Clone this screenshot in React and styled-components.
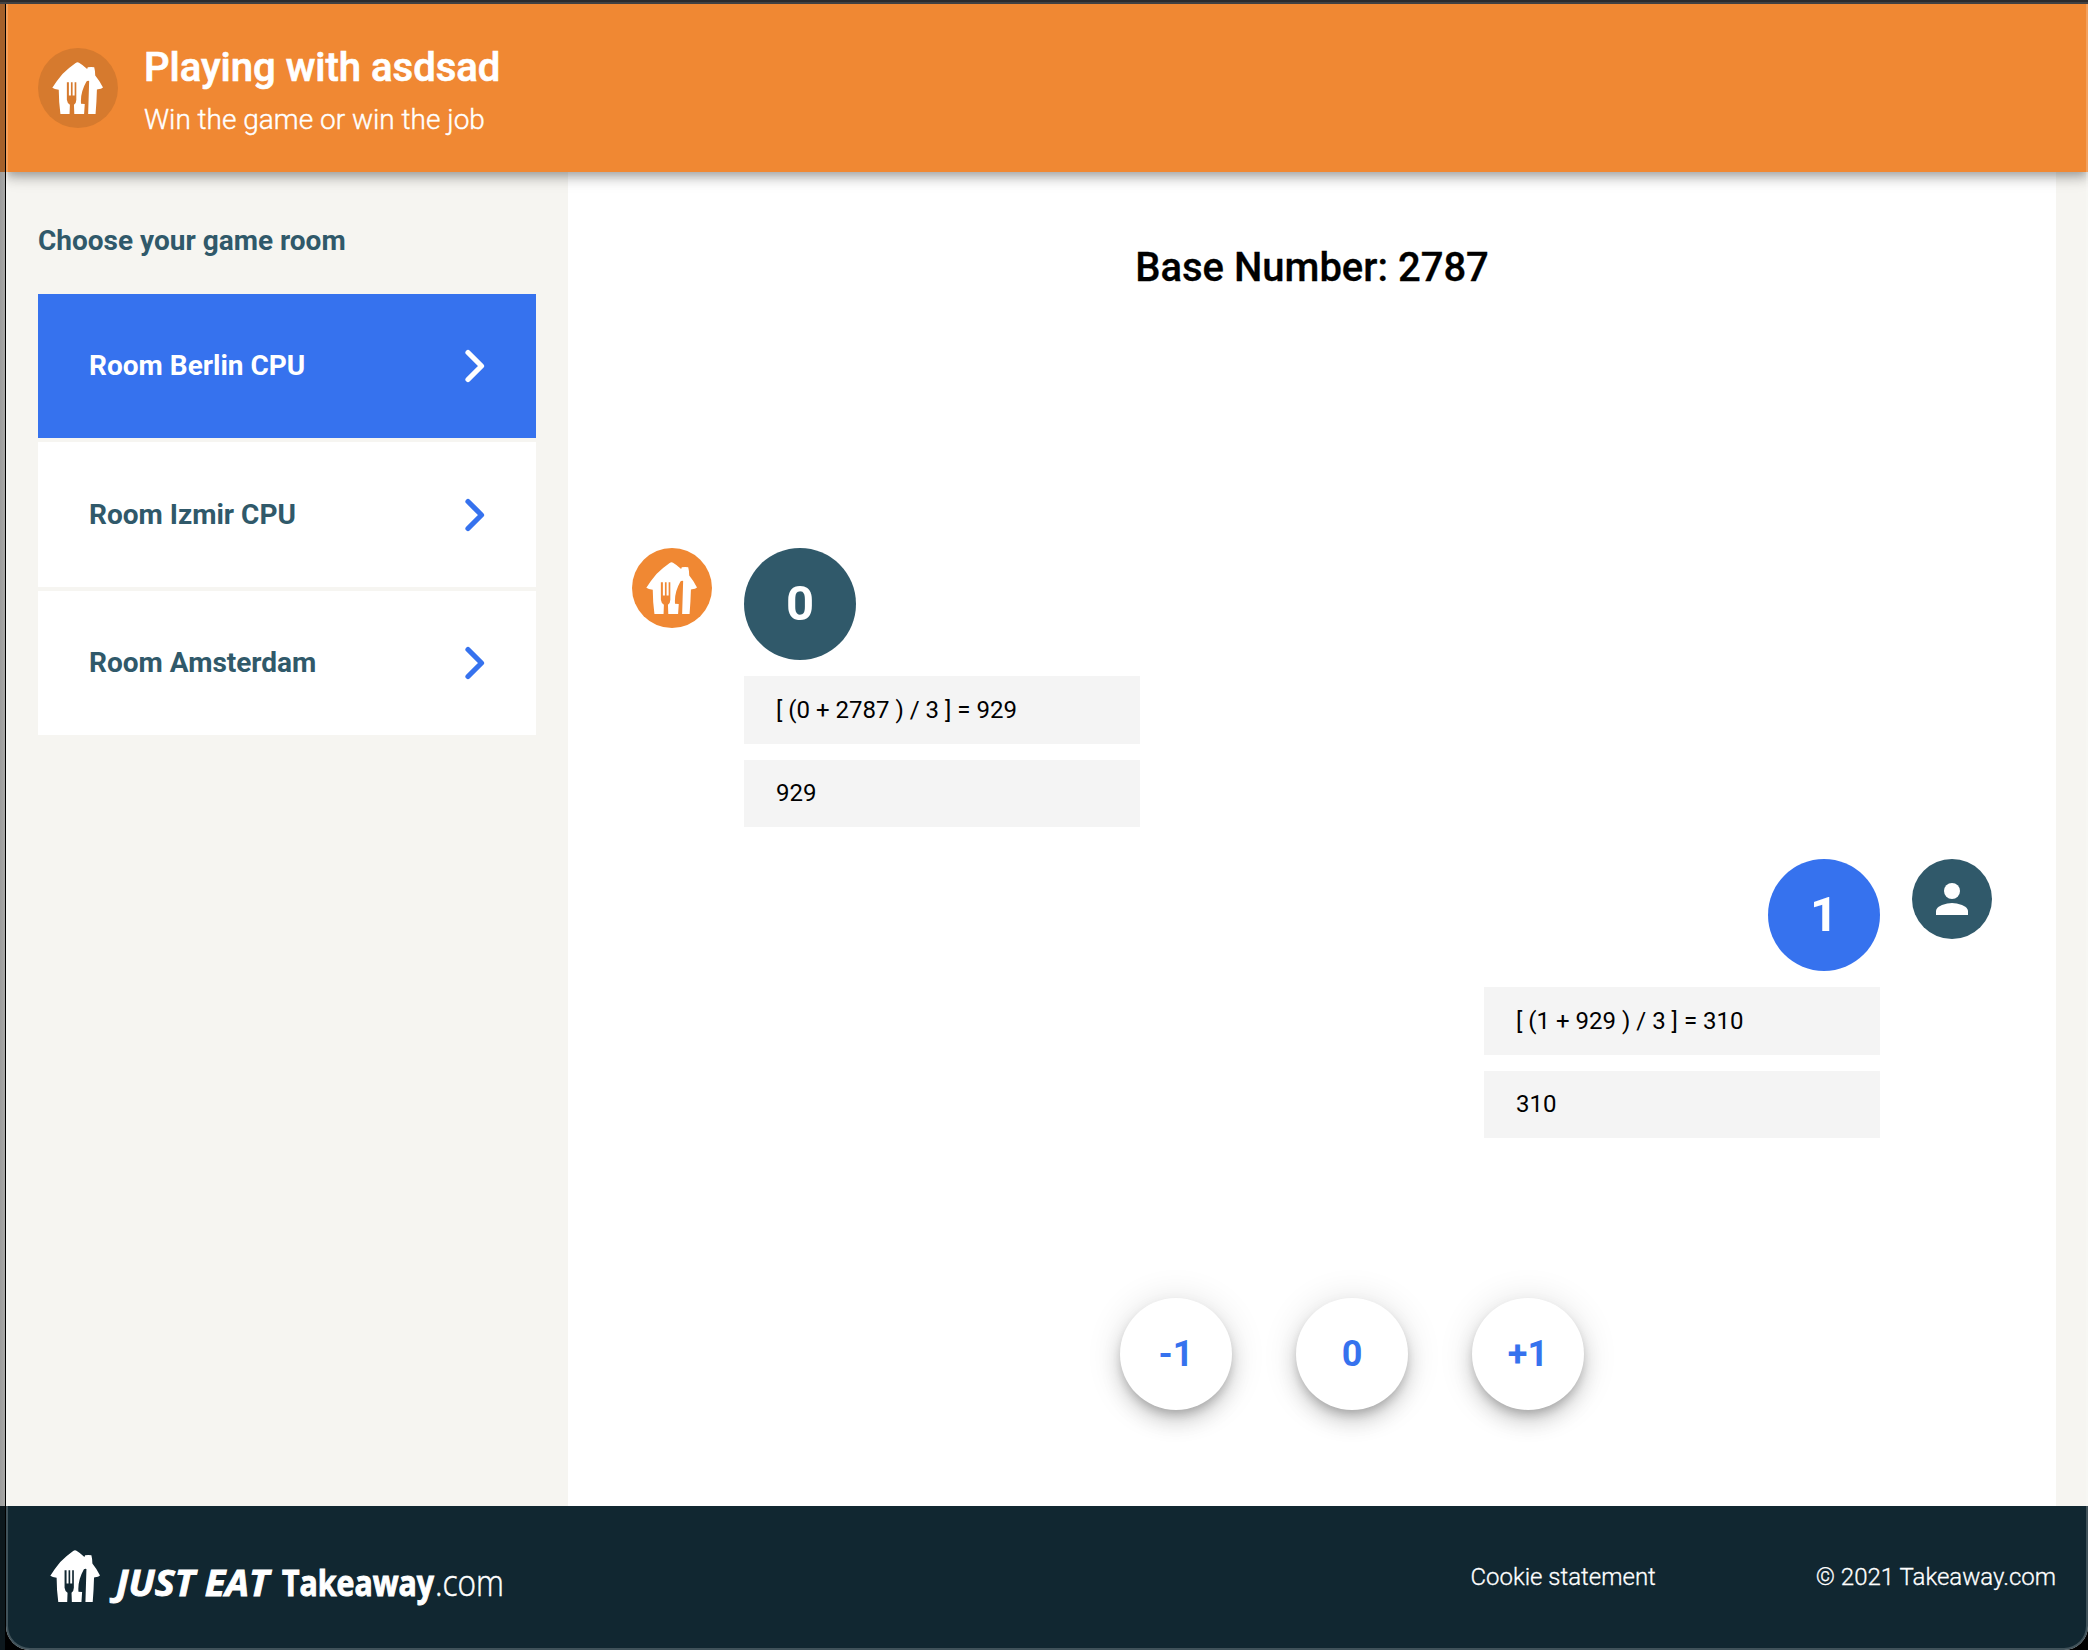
import React from "react";
import styled, { createGlobalStyle } from "styled-components";

const GlobalStyle = createGlobalStyle`
  * { box-sizing: border-box; }
  body { margin: 0; background: #000; font-family: Roboto, "Liberation Sans", sans-serif; }
  h1, h2, p { margin: 0; }
  button { font-family: inherit; border: 0; margin: 0; }
`;

const Desktop = styled.div`
  position: relative;
  height: 1650px;
  padding-left: 6px;
  overflow: hidden;
  background: linear-gradient(90deg, #a3602a 0 5px, #000 5px 6px, transparent 6px) 0 4px / 100% 168px no-repeat,
    linear-gradient(90deg, #0d181d 0 5px, #000 5px 6px, transparent 6px) 0 1506px / 100% 144px no-repeat,
    linear-gradient(90deg, #9d9d9d, #a8a8a6 5px, #000 5px 6px, #000 6px);
`;

const Window = styled.div`
  height: 1650px;
  display: flex;
  flex-direction: column;
  border-radius: 0 0 24px 24px;
  overflow: hidden;
  background: #f6f5f1;
`;

const TopEdge = styled.div`
  position: absolute;
  inset: 0 0 auto 0;
  height: 4px;
  background: linear-gradient(#2b2b2d 0 2px, #414143 2px 4px);
  z-index: 3;
`;

const WindowEdge = styled.div`
  position: absolute;
  inset: 0 0 0 6px;
  border: 2px solid rgba(255, 255, 255, 0.2);
  border-top: 0;
  border-radius: 0 0 24px 24px;
  pointer-events: none;
  z-index: 2;
`;

const Header = styled.header`
  flex: none;
  height: 172px;
  padding: 4px 32px 0;
  display: flex;
  align-items: center;
  gap: 26px;
  color: #fff;
  background: #f08833;
  position: relative;
  z-index: 1;
  box-shadow: 0 4px 8px -2px rgba(0, 0, 0, 0.2), 0 8px 10px rgba(0, 0, 0, 0.14), 0 2px 20px rgba(0, 0, 0, 0.12);
`;

const Avatar = styled.div`
  flex: none;
  width: 80px;
  height: 80px;
  border-radius: 50%;
  display: grid;
  place-items: center;
  color: #fff;
  background: ${(p) => p.$color};
`;

const Titles = styled.div`
  display: flex;
  flex-direction: column;
  gap: 8px;
  padding-top: 8px;
`;

const Title = styled.h1`
  font-size: 40px;
  line-height: 48px;
  font-weight: 500;
  -webkit-text-stroke: 0.7px currentColor;
`;

const Subtitle = styled.p`
  font-size: 28px;
  line-height: 40px;
  font-weight: 300;
  -webkit-text-stroke: 0.4px currentColor;
`;

const Body = styled.div`
  flex: 1;
  display: flex;
  padding-right: 32px;
`;

const Sidebar = styled.aside`
  width: 562px;
  padding: 49px 32px 0;
`;

const SidebarTitle = styled.h2`
  font-size: 28px;
  line-height: 40px;
  font-weight: 700;
  color: #30596a;
  margin-bottom: 33px;
`;

const RoomList = styled.div`
  display: grid;
  grid-template-rows: 144px 145px 144px;
  gap: 4px;
`;

const Room = styled.button`
  padding: 0 51px 0 51px;
  display: flex;
  align-items: center;
  justify-content: space-between;
  font-size: 28px;
  font-weight: 700;
  text-align: left;
  color: ${(p) => (p.$active ? "#fff" : "#30596a")};
  background: ${(p) => (p.$active ? "#3672ee" : "#fff")};
  svg { color: ${(p) => (p.$active ? "#fff" : "#3672ee")}; }
`;

const RoomName = styled.span`
  padding-bottom: 1px;
`;

const Main = styled.main`
  flex: 1;
  background: #fff;
  padding: 72px 64px 96px;
  display: flex;
  flex-direction: column;
`;

const BaseNumber = styled.h2`
  font-size: 40px;
  line-height: 48px;
  font-weight: 500;
  text-align: center;
  color: #000;
  -webkit-text-stroke: 0.3px currentColor;
`;

const Moves = styled.div`
  margin-top: 256px;
  display: flex;
  flex-direction: column;
  gap: 32px;
`;

const Move = styled.div`
  display: flex;
  gap: 32px;
  flex-direction: ${(p) => (p.$mine ? "row-reverse" : "row")};
`;

const MoveContent = styled.div`
  display: flex;
  flex-direction: column;
  gap: 16px;
  align-items: ${(p) => (p.$mine ? "flex-end" : "flex-start")};
`;

const Pick = styled.div`
  width: 112px;
  height: 112px;
  padding-bottom: 2px;
  border-radius: 50%;
  display: grid;
  place-items: center;
  font-size: 49px;
  font-weight: 700;
  color: #fff;
  background: ${(p) => p.$color};
`;

const Formula = styled.div`
  width: 396px;
  height: ${(p) => p.$height}px;
  padding: 0 32px 1px;
  display: flex;
  align-items: center;
  font-size: 24px;
  color: #000;
  background: #f4f4f4;
`;

const Choices = styled.div`
  margin-top: auto;
  padding-left: 80px;
  display: flex;
  justify-content: center;
  gap: 64px;
`;

const Choice = styled.button`
  width: 112px;
  height: 112px;
  padding: 0;
  border-radius: 50%;
  font-size: 36px;
  font-weight: 700;
  color: #3672ee;
  background: #fff;
  box-shadow: 0 6px 10px -2px rgba(0, 0, 0, 0.2), 0 12px 20px rgba(0, 0, 0, 0.14), 0 2px 36px rgba(0, 0, 0, 0.12);
`;

const Footer = styled.footer`
  flex: none;
  height: 144px;
  padding: 0 32px 3px 44px;
  display: flex;
  align-items: center;
  color: #fff;
  background: #112731;
  font-size: 24px;
  font-weight: 300;
`;

const FooterLinks = styled.div`
  margin-left: auto;
  display: flex;
  gap: 160px;
  -webkit-text-stroke: 0.3px currentColor;
`;

const HouseSvg = styled.svg`
  margin-right: ${(p) => p.$shift || 0}px;
`;

const House = ({ width, height, shift }) => (
  <HouseSvg $shift={shift} width={width} height={height} viewBox="59 29 151 157" preserveAspectRatio="none" fill="currentColor">
    <path
      fillRule="evenodd"
      d="M60 107Q74 84 90 65Q108 47 129 32Q134 28 139 31Q151 38 163 50L165 45Q175 43 184 45Q187 56 187 70Q200 86 210 106Q207 110 192 112Q191 150 188 186H166L169 86Q164 84 161 88Q142 122 145 155L156 156L154 186H125L124 158Q131 153 131 143V90H126V130H120V90H115V130H109V90H103V143Q104 153 112 158L111 186H84Q79 150 79 113Q66 112 60 107Z"
    />
  </HouseSvg>
);

const Chevron = () => (
  <svg width="20" height="34" viewBox="0 0 20 34" fill="none" stroke="currentColor" strokeWidth="5.2" strokeLinecap="round" strokeLinejoin="round">
    <path d="M3 3.5L16.5 17L3 30.5" />
  </svg>
);

const Person = () => (
  <svg width="32" height="32" viewBox="0 0 32 32" fill="currentColor">
    <circle cx="16" cy="8" r="8" />
    <path d="M0 32V28C0 22.7 10.7 20 16 20S32 22.7 32 28V32Z" />
  </svg>
);

const LogoRow = styled.div`
  display: flex;
  gap: 13px;
  padding-top: 6px;
`;

const Logo = () => (
  <LogoRow>
    <House width="50" height="52" />
    <svg width="392" height="60" viewBox="113 1550 392 60" overflow="visible" fill="currentColor" stroke="currentColor" fontFamily='"Open Sans", "Noto Sans", sans-serif'>
      <text x="116" y="1596" fontSize="36" strokeWidth="0.9" fontWeight="700" fontStyle="italic" textLength="153" lengthAdjust="spacingAndGlyphs">JUST EAT</text>
      <text x="282" y="1596" fontSize="36" strokeWidth="1" fontWeight="700" textLength="152" lengthAdjust="spacingAndGlyphs">Takeaway</text>
      <text x="435" y="1596" fontSize="36" strokeWidth="0.5" fontWeight="300" textLength="69" lengthAdjust="spacingAndGlyphs">.com</text>
    </svg>
  </LogoRow>
);

const rooms = ["Room Berlin CPU", "Room Izmir CPU", "Room Amsterdam"];

const moves = [
  { mine: false, pick: "0", formula: "[ (0 + 2787 ) / 3 ] = 929", result: "929" },
  { mine: true, pick: "1", formula: "[ (1 + 929 ) / 3 ] = 310", result: "310" },
];

export default function App() {
  return (
    <Desktop>
      <GlobalStyle />
      <TopEdge />
      <Window>
        <Header>
          <Avatar $color="#d67a2e">
            <House width="51" height="52" shift={2} />
          </Avatar>
          <Titles>
            <Title>Playing with asdsad</Title>
            <Subtitle>Win the game or win the job</Subtitle>
          </Titles>
        </Header>
        <Body>
          <Sidebar>
            <SidebarTitle>Choose your game room</SidebarTitle>
            <RoomList>
              {rooms.map((name, i) => (
                <Room key={name} $active={i === 0}>
                  <RoomName>{name}</RoomName>
                  <Chevron />
                </Room>
              ))}
            </RoomList>
          </Sidebar>
          <Main>
            <BaseNumber>Base Number: 2787</BaseNumber>
            <Moves>
              {moves.map((m) => (
                <Move key={m.formula} $mine={m.mine}>
                  <Avatar $color={m.mine ? "#30596a" : "#f08833"}>
                    {m.mine ? <Person /> : <House width="51" height="52" shift={2} />}
                  </Avatar>
                  <MoveContent $mine={m.mine}>
                    <Pick $color={m.mine ? "#3672ee" : "#30596a"}>{m.pick}</Pick>
                    <Formula $height={68}>{m.formula}</Formula>
                    <Formula $height={67}>{m.result}</Formula>
                  </MoveContent>
                </Move>
              ))}
            </Moves>
            <Choices>
              {["-1", "0", "+1"].map((c) => (
                <Choice key={c}>{c}</Choice>
              ))}
            </Choices>
          </Main>
        </Body>
        <Footer>
          <Logo />
          <FooterLinks>
            <span>Cookie statement</span>
            <span>© 2021 Takeaway.com</span>
          </FooterLinks>
        </Footer>
      </Window>
      <WindowEdge />
    </Desktop>
  );
}
